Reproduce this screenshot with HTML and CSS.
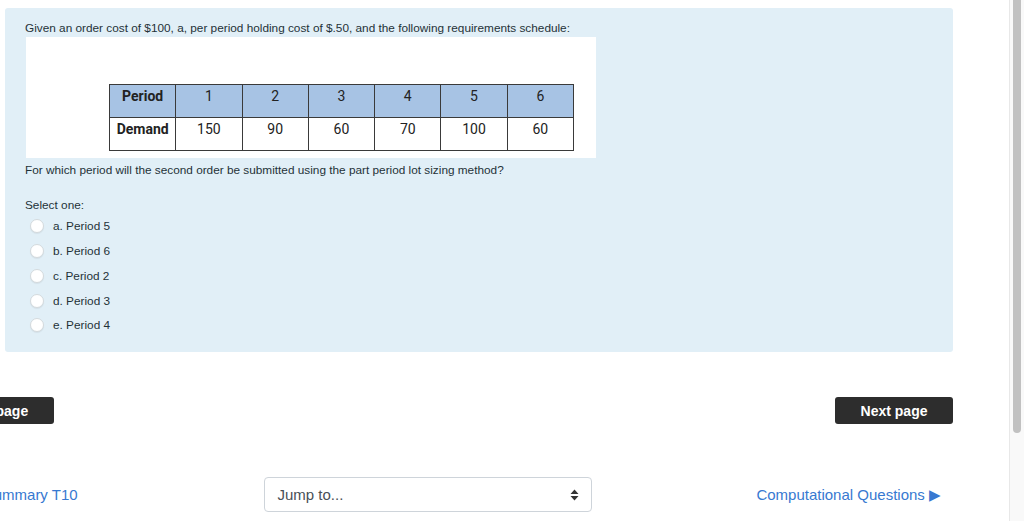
FILE: index.html
```html
<!DOCTYPE html>
<html lang="en">
<head>
    <meta charset="UTF-8">
    <title>Quiz</title>
    <link rel="stylesheet" href="styles.css">
</head>
<body>
<div class="shell">
    <div class="main">
        <div class="page">
            <div class="que">
                <div class="info"></div>
                <div class="formulation">
                    <p class="qtext">Given an order cost of $100, a, per period holding cost of $.50, and the following requirements schedule:</p>
                    <div class="figure">
                        <table class="sched">
                            <tr class="head">
                                <th>Period</th><td>1</td><td>2</td><td>3</td><td>4</td><td>5</td><td>6</td>
                            </tr>
                            <tr>
                                <th>Demand</th><td>150</td><td>90</td><td>60</td><td>70</td><td>100</td><td>60</td>
                            </tr>
                        </table>
                    </div>
                    <p class="qtext after">For which period will the second order be submitted using the part period lot sizing method?</p>
                    <p class="prompt">Select one:</p>
                    <div class="answers">
                        <label class="opt"><span class="radio"></span>a. Period 5</label>
                        <label class="opt"><span class="radio"></span>b. Period 6</label>
                        <label class="opt"><span class="radio"></span>c. Period 2</label>
                        <label class="opt"><span class="radio"></span>d. Period 3</label>
                        <label class="opt"><span class="radio"></span>e. Period 4</label>
                    </div>
                </div>
            </div>
            <div class="nav">
                <button class="btn">Previous page</button>
                <button class="btn">Next page</button>
            </div>
            <div class="actnav">
                <a class="link left" href="#">&#9664;&#xFE0E; Chapter Summary T10</a>
                <div class="jump">
                    <span>Jump to...</span>
                    <svg width="9" height="12" viewBox="0 0 9 12"><path d="M4.5 0.5 L8.5 5 L0.5 5 Z M0.5 7 L8.5 7 L4.5 11.5 Z" fill="#333"/></svg>
                </div>
                <a class="link right" href="#">Computational Questions &#9654;&#xFE0E;</a>
            </div>
        </div>
    </div>
    <div class="scrollbar"><div class="thumb"></div></div>
</div>
</body>
</html>
```

FILE: styles.css
```css
body {
    margin: 0;
    overflow: hidden;
    font-family: "Liberation Sans", Arial, sans-serif;
    background: #fff;
}
.shell {
    display: flex;
    height: 521px;
}
.main {
    flex: 1;
    overflow: hidden;
}
.page {
    margin-left: -93px;
    width: 1046px;
}
.que {
    display: flex;
    padding-top: 8px;
}
.info {
    width: 98px;
    flex-shrink: 0;
}
.formulation {
    width: 948px;
    height: 344px;
    box-sizing: border-box;
    background: #e1eff7;
    border-radius: 3px;
    padding: 11px 20px 0 20px;
    color: #1f3238;
}
.qtext {
    margin: 0;
    font-size: 11.8px;
    line-height: 18px;
}
.qtext.after {
    margin-top: 3px;
}
.figure {
    width: 570px;
    height: 121px;
    box-sizing: border-box;
    margin-left: 1px;
    background: #fff;
    padding: 47px 0 0 83px;
}
.sched {
    border-collapse: collapse;
    table-layout: fixed;
    width: 465px;
    font-family: Roboto, "Liberation Sans", sans-serif;
    font-size: 14px;
    color: #222;
}
.sched th, .sched td {
    border: 1px solid #3a3a3a;
    width: 66px;
    height: 33px;
    padding: 0;
    text-align: center;
    vertical-align: top;
    padding-top: 3px;
    box-sizing: border-box;
    font-weight: normal;
}
.sched th {
    font-weight: bold;
}
.sched .head th, .sched .head td {
    background: #a7c3e4;
}
.prompt {
    margin: 17px 0 0 0;
    font-size: 11.8px;
    line-height: 18px;
}
.opt {
    display: flex;
    align-items: center;
    height: 24.75px;
    font-size: 11.8px;
    padding-left: 5px;
}
.radio {
    width: 12px;
    height: 12px;
    border-radius: 50%;
    background: #fff;
    border: 1px solid #d4dadd;
    box-shadow: 0 1px 1px rgba(0,0,0,0.06);
    margin-right: 9px;
}
.nav {
    display: flex;
    justify-content: space-between;
    margin-top: 45px;
}
.btn {
    height: 27px;
    padding: 0 25.5px;
    border: none;
    border-radius: 3px;
    background: #2d2d2d;
    color: #fff;
    font-family: "Liberation Sans", Arial, sans-serif;
    font-weight: bold;
    font-size: 14px;
}
.actnav {
    display: grid;
    grid-template-columns: 1fr auto 1fr;
    align-items: center;
    margin-top: 53px;
    padding-right: 5px;
}
.link {
    color: #3779d1;
    text-decoration: none;
    font-size: 15px;
}
.link.left {
    justify-self: start;
    margin-left: 3px;
}
.link.right {
    justify-self: end;
    margin-right: 7px;
}
.jump {
    width: 328px;
    height: 35px;
    box-sizing: border-box;
    border: 1px solid #ced4da;
    border-radius: 4px;
    display: flex;
    align-items: center;
    justify-content: space-between;
    padding: 0 12px 0 13px;
    font-size: 15px;
    color: #495057;
}
.scrollbar {
    width: 15px;
    flex-shrink: 0;
    background: #f9f9f9;
    border-left: 1px solid #e8e8e8;
    box-sizing: border-box;
    padding: 0 3px 0 3px;
}
.thumb {
    height: 433px;
    background: #c1c1c1;
    border-radius: 0 0 4px 4px;
}
```
